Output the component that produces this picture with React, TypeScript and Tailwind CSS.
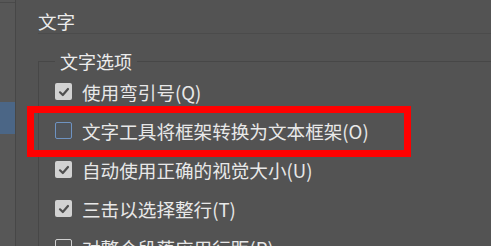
import React from "react";

const font = {fontFamily: '"Noto Sans CJK SC", "Noto Sans", sans-serif'}

function CheckBox({checked, focus}: { checked: boolean, focus?: boolean }) {
    if (checked) {
        return (
            <div className="w-[17px] h-[17px] rounded-[2px] bg-[#d2d2d2] flex items-center justify-center shrink-0">
                <svg width="12" height="12" viewBox="0 0 12 12">
                    <path d="M2 6.3 L4.8 9 L10 3" fill="none" stroke="#4f4f4f" strokeWidth="2.2"
                          strokeLinecap="round" strokeLinejoin="round"/>
                </svg>
            </div>
        )
    }
    return (
        <div className={focus
            ? "w-[17px] h-[17px] rounded-[2px] border border-[#6e93c2] bg-[#50545a] shrink-0"
            : "w-[17px] h-[17px] rounded-[2px] border border-[#d0d0d0] bg-[#535353] shrink-0"}/>
    )
}

function Row({label, checked, focus}: { label: string, checked: boolean, focus?: boolean }) {
    return (
        <div className="h-[39px] flex items-center gap-[10px]">
            <CheckBox checked={checked} focus={focus}/>
            <span className="text-[18.6px] leading-[24px] text-[#e8e8e8] whitespace-nowrap">{label}</span>
        </div>
    )
}

export default function App() {
    return (
        <div className="relative w-[491px] h-[246px] overflow-hidden bg-[#535353] flex" style={font}>
            <div className="w-[16px] h-full bg-[#575757] border-r border-[#474747] shrink-0 flex flex-col">
                <div className="h-[3px] border-b border-[#4a4a4a]"/>
                <div className="mt-[99px] h-[32px] bg-[#4b6686]"/>
            </div>
            <div className="flex-1 pl-[22px]">
                <div className="pt-[9px] leading-[24px] text-[18.6px] text-[#ececec] border-b border-[#4b4b4b]">
                    文字
                </div>
                <fieldset className="mt-[15px] border-t border-l border-[#474747] pl-[16px]">
                    <legend className="px-[5px] text-[18px] leading-[24px] text-[#ececec]">
                        文字选项
                    </legend>
                    <div className="flex flex-col -mt-[1px]">
                        <Row label="使用弯引号(Q)" checked={true}/>
                        <Row label="文字工具将框架转换为文本框架(O)" checked={false} focus={true}/>
                        <Row label="自动使用正确的视觉大小(U)" checked={true}/>
                        <Row label="三击以选择整行(T)" checked={true}/>
                        <Row label="对整个段落应用行距(P)" checked={false}/>
                    </div>
                </fieldset>
            </div>
            <div
                className="absolute left-[27px] top-[106px] w-[384px] h-[51px] border-[7px] border-[#ff0000] blur-[0.4px]"/>
        </div>
    )
}
